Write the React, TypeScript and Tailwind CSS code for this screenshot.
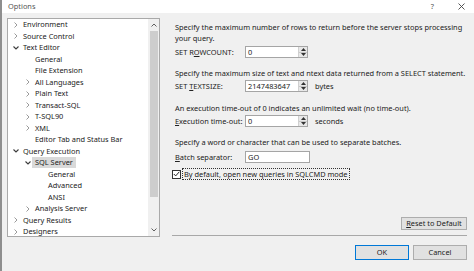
import React from 'react';

type Node = { label: string; level: number; state?: 'open' | 'closed'; selected?: boolean };

const tree: Node[] = [
  { label: 'Environment', level: 0, state: 'closed' },
  { label: 'Source Control', level: 0, state: 'closed' },
  { label: 'Text Editor', level: 0, state: 'open' },
  { label: 'General', level: 1 },
  { label: 'File Extension', level: 1 },
  { label: 'All Languages', level: 1, state: 'closed' },
  { label: 'Plain Text', level: 1, state: 'closed' },
  { label: 'Transact-SQL', level: 1, state: 'closed' },
  { label: 'T-SQL90', level: 1, state: 'closed' },
  { label: 'XML', level: 1, state: 'closed' },
  { label: 'Editor Tab and Status Bar', level: 1 },
  { label: 'Query Execution', level: 0, state: 'open' },
  { label: 'SQL Server', level: 1, state: 'open', selected: true },
  { label: 'General', level: 2 },
  { label: 'Advanced', level: 2 },
  { label: 'ANSI', level: 2 },
  { label: 'Analysis Server', level: 1, state: 'closed' },
  { label: 'Query Results', level: 0, state: 'closed' },
  { label: 'Designers', level: 0, state: 'closed' },
];

const indent = ['pl-[5px]', 'pl-[17px]', 'pl-[30px]'];

const Chevron: React.FC<{ state?: 'open' | 'closed' }> = ({ state }) => (
  <span className="flex w-[10px] shrink-0 items-center">
    {state === 'closed' && (
      <svg width="4" height="6" viewBox="0 0 4 6" className="ml-[1px]">
        <polyline points="0.5,0.5 3,3 0.5,5.5" fill="none" stroke="#9a9a9a" strokeWidth="1" />
      </svg>
    )}
    {state === 'open' && (
      <svg width="6" height="4" viewBox="0 0 6 4">
        <polyline points="0.5,0.5 3,3 5.5,0.5" fill="none" stroke="#3c3c3c" strokeWidth="1.1" />
      </svg>
    )}
  </span>
);

const Spin: React.FC = () => (
  <div className="flex w-[9px] flex-col border-l border-[#d0d0d0] bg-[#e8e8e8]">
    <div className="flex flex-1 items-center justify-center border-b border-[#c8c8c8]">
      <svg width="5" height="3" viewBox="0 0 5 3">
        <polygon points="0,3 2.5,0 5,3" fill="#333" />
      </svg>
    </div>
    <div className="flex flex-1 items-center justify-center">
      <svg width="5" height="3" viewBox="0 0 5 3">
        <polygon points="0,0 2.5,3 5,0" fill="#333" />
      </svg>
    </div>
  </div>
);

const Field: React.FC<{ value: string; spin?: boolean; wide?: boolean }> = ({ value, spin, wide }) => (
  <div
    className={`flex h-[12px] ${wide ? 'w-[65px]' : 'w-[63px]'} border border-[#a5a5a5] bg-white`}
  >
    <span className="flex-1 pl-[2px] leading-[10px]">{value}</span>
    {spin && <Spin />}
  </div>
);

const Row: React.FC<{ label: React.ReactNode; children: React.ReactNode; className?: string }> = ({
  label,
  children,
  className,
}) => (
  <div className={`flex items-center ${className ?? ''}`}>
    <span className="w-[70px] shrink-0">{label}</span>
    {children}
  </div>
);

const Button: React.FC<{ children: React.ReactNode; className?: string }> = ({ children, className }) => (
  <div
    className={`flex items-center justify-center border bg-[#e1e1e1] leading-none ${className ?? ''}`}
  >
    {children}
  </div>
);

export default function App() {
  return (
    <div className="flex h-[271px] w-[474px] overflow-hidden font-['Noto_Sans',sans-serif] text-[7.4px] leading-[11px] text-[#222]">
      <div className="w-[2px] shrink-0 bg-[#8e8e8e]" />
      <div className="flex flex-1 flex-col bg-[#f0f0f0]">
        {/* title bar */}
        <div className="flex h-[13px] items-center bg-white pl-[6px] pr-[9px] text-[#555]">
          <span className="flex-1">Options</span>
          <span className="mr-[24px]">?</span>
          <svg width="7" height="7" viewBox="0 0 7 7">
            <path d="M0.5 0.5 L6.5 6.5 M6.5 0.5 L0.5 6.5" stroke="#444" strokeWidth="0.9" />
          </svg>
        </div>

        <div className="flex h-[224px]">
          {/* tree */}
          <div className="ml-[5px] mt-[5px] flex h-[219px] w-[153px] border border-[#a9a9a9] bg-white">
            <div className="flex-1 overflow-hidden">
              {tree.map((n, i) => (
                <div key={i} className={`flex h-[11.5px] items-center whitespace-nowrap ${indent[n.level]}`}>
                  <Chevron state={n.state} />
                  <span className={n.selected ? '-ml-[3px] bg-[#d9d9d9] px-[3px]' : ''}>{n.label}</span>
                </div>
              ))}
            </div>
            <div className="flex w-[11px] flex-col bg-[#f0f0f0]">
              <div className="flex h-[12px] items-center justify-center">
                <svg width="6" height="4" viewBox="0 0 6 4">
                  <polyline points="0.5,3.5 3,1 5.5,3.5" fill="none" stroke="#606060" strokeWidth="1" />
                </svg>
              </div>
              <div className="flex flex-1 flex-col px-[1.5px]">
                <div className="h-[166px] bg-[#cdcdcd]" />
              </div>
              <div className="flex h-[12px] items-center justify-center">
                <svg width="6" height="4" viewBox="0 0 6 4">
                  <polyline points="0.5,0.5 3,3 5.5,0.5" fill="none" stroke="#606060" strokeWidth="1" />
                </svg>
              </div>
            </div>
          </div>

          {/* settings */}
          <div className="ml-[12px] flex w-[295px] flex-col pb-[1px]">
            <div className="pl-[3px] pt-[8.5px]">
              <p>Specify the maximum number of rows to return before the server stops processing</p>
              <p>your query.</p>
              <Row className="mt-[2.5px]" label={<>SET R<u>O</u>WCOUNT:</>}>
                <Field value="0" spin />
              </Row>
              <p className="mt-[9.5px]">Specify the maximum size of text and ntext data returned from a SELECT statement.</p>
              <Row className="mt-[1.5px]" label={<>SET <u>T</u>EXTSIZE:</>}>
                <Field value="2147483647" spin />
                <span className="ml-[7px]">bytes</span>
              </Row>
              <p className="mt-[10.5px]">An execution time-out of 0 indicates an unlimited wait (no time-out).</p>
              <Row className="mt-[1.5px]" label={<><u>E</u>xecution time-out:</>}>
                <Field value="0" spin />
                <span className="ml-[7px]">seconds</span>
              </Row>
              <p className="mt-[9.5px]">Specify a word or character that can be used to separate batches.</p>
              <Row className="mt-[3.5px]" label={<><u>B</u>atch separator:</>}>
                <Field value="GO" wide />
              </Row>
            </div>
            <div className="mt-[5px] flex items-center">
              <div className="flex h-[9px] w-[9px] items-center justify-center border border-[#333] bg-white">
                <svg width="7" height="6" viewBox="0 0 7 6">
                  <polyline points="0.8,3 2.7,4.9 6.3,0.8" fill="none" stroke="#222" strokeWidth="1" />
                </svg>
              </div>
              <span className="ml-[1px] h-[12px] border border-dotted border-[#333] px-[1px] leading-[10px]">
                By default, open new queries in SQLCMD mode
              </span>
            </div>
            <div className="flex-1" />
            <div className="flex justify-end">
              <Button className="h-[13px] w-[66px] border-[#adadad]">
                <span>
                  <u>R</u>eset to Default
                </span>
              </Button>
            </div>
            <div className="mt-[5px] h-px bg-[#a8a8a8]" />
          </div>
        </div>

        {/* footer */}
        <div className="mt-[8px] flex justify-end gap-[4px] pr-[7px]">
          <Button className="h-[15px] w-[54px] border-[#0078d7]">OK</Button>
          <Button className="h-[15px] w-[54px] border-[#adadad]">Cancel</Button>
        </div>
      </div>
    </div>
  );
}
